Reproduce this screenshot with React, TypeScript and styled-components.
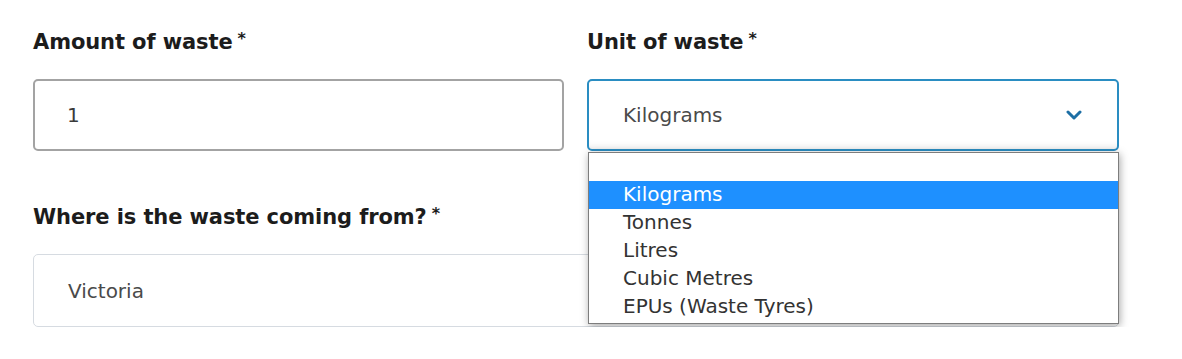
import styled, { createGlobalStyle } from "styled-components";

const GlobalStyle = createGlobalStyle`
  html, body {
    margin: 0;
    padding: 0;
    background: #ffffff;
  }
  body {
    font-family: "DejaVu Sans", "Liberation Sans", sans-serif;
    color: #333333;
  }
`;

const Page = styled.div`
  padding: 30px 0 0 33px;
`;

const FormGrid = styled.div`
  display: grid;
  grid-template-columns: 531px 532px;
  column-gap: 23px;
  row-gap: 54px;
`;

const Field = styled.div<{ $wide?: boolean }>`
  display: flex;
  flex-direction: column;
  gap: 25px;
  position: relative;
  grid-column: ${({ $wide }) => ($wide ? "1 / span 2" : "auto")};
`;

const Label = styled.label`
  display: flex;
  align-items: flex-start;
  font-size: 21px;
  line-height: 24px;
  font-weight: 700;
  color: #1c1c1c;
  letter-spacing: -0.1px;
`;

const Required = styled.span`
  font-size: 16px;
  line-height: 16px;
  margin-left: 5px;
  margin-top: 1px;
`;

const TextBox = styled.div`
  box-sizing: border-box;
  height: 72px;
  display: flex;
  align-items: center;
  padding-left: 32px;
  border: 2px solid #a3a3a3;
  border-radius: 5px;
  font-size: 20px;
  color: #3a3a3a;
`;

const SelectBox = styled.div<{ $focused?: boolean }>`
  box-sizing: border-box;
  height: ${({ $focused }) => ($focused ? "72px" : "73px")};
  display: flex;
  align-items: center;
  justify-content: space-between;
  padding: 0 34px;
  border: ${({ $focused }) =>
    $focused ? "2px solid #2a8dc2" : "1px solid #d6dbe1"};
  border-radius: 5px;
  font-size: 20px;
  color: #4a4a4a;
  background: #ffffff;
  box-shadow: ${({ $focused }) =>
    $focused ? "inset 0 -10px 10px -10px rgba(0, 0, 0, 0.12)" : "none"};
`;

const Chevron = styled.svg`
  width: 16px;
  height: 10px;
  margin-right: 1px;
`;

const Dropdown = styled.ul`
  position: absolute;
  top: 122px;
  left: 1px;
  right: 0;
  margin: 0;
  padding: 28px 0 2px;
  list-style: none;
  background: #ffffff;
  border: 1px solid #7d7d7d;
  box-shadow: 1px 2px 8px rgba(0, 0, 0, 0.35);
  z-index: 10;
`;

const Option = styled.li<{ $active?: boolean }>`
  height: 28px;
  line-height: 27px;
  padding-left: 34px;
  font-size: 20px;
  color: ${({ $active }) => ($active ? "#ffffff" : "#333333")};
  background: ${({ $active }) => ($active ? "#1e90ff" : "transparent")};
`;

const units = ["Kilograms", "Tonnes", "Litres", "Cubic Metres", "EPUs (Waste Tyres)"];

export default function App() {
  return (
    <>
      <GlobalStyle />
      <Page>
        <FormGrid>
          <Field>
            <Label>
              Amount of waste<Required>*</Required>
            </Label>
            <TextBox>1</TextBox>
          </Field>
          <Field>
            <Label>
              Unit of waste<Required>*</Required>
            </Label>
            <SelectBox $focused>
              Kilograms
              <Chevron viewBox="0 0 16 10">
                <polyline
                  points="2,2 8,8 14,2"
                  fill="none"
                  stroke="#1d6fa5"
                  strokeWidth="3"
                  strokeLinecap="round"
                  strokeLinejoin="round"
                />
              </Chevron>
            </SelectBox>
            <Dropdown>
              {units.map((u) => (
                <Option key={u} $active={u === "Kilograms"}>
                  {u}
                </Option>
              ))}
            </Dropdown>
          </Field>
          <Field $wide>
            <Label>
              Where is the waste coming from?<Required>*</Required>
            </Label>
            <SelectBox>Victoria</SelectBox>
          </Field>
        </FormGrid>
      </Page>
    </>
  );
}
